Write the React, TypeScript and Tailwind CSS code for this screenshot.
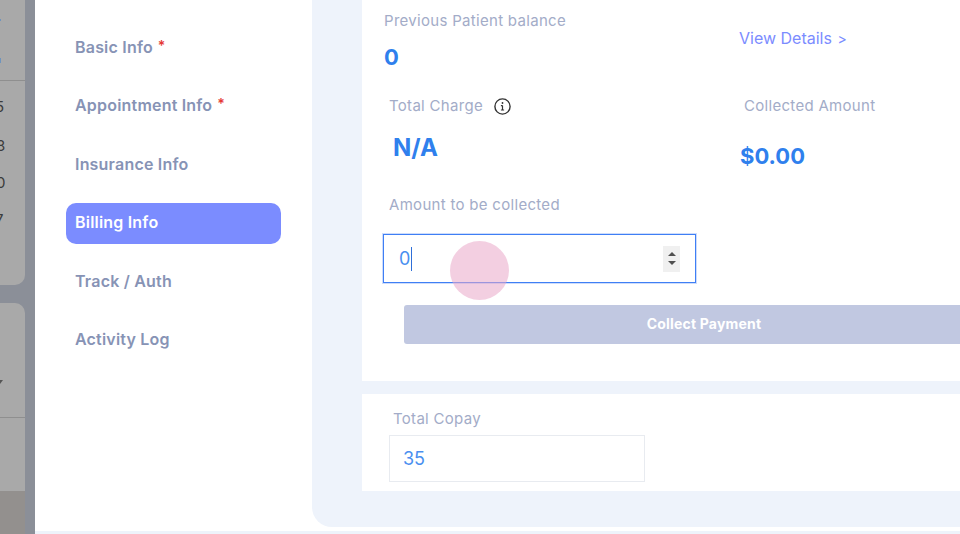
const navItems = [
  { label: "Basic Info", required: true },
  { label: "Appointment Info", required: true },
  { label: "Insurance Info" },
  { label: "Billing Info", active: true },
  { label: "Track / Auth" },
  { label: "Activity Log" },
];

const BackdropStrip = () => (
  <aside className="relative h-[534px] w-[35px] shrink-0 overflow-hidden bg-[#8b8f98] text-[15px] text-[#3c3c3c]">
    <div className="h-[285px] w-[25px] rounded-br-[10px] bg-[#a9a9a9]">
      <div className="h-[81px] border-b border-[#8f8f8f]" />
      <div className="flex w-[5px] flex-col overflow-hidden pt-[17px] leading-[18px]">
        <span className="-ml-[5px] mb-[21px]">5</span>
        <span className="-ml-[4px] mb-[19px]">8</span>
        <span className="-ml-[4px] mb-[19px]">0</span>
        <span className="-ml-[5px]">7</span>
      </div>
    </div>
    <div className="mt-[18px] h-[188px] w-[25px] rounded-tr-[10px] bg-[#a9a9a9]">
      <div className="h-[115px] border-b border-[#8f8f8f]" />
    </div>
    <div className="h-[43px] w-[25px] bg-[#93908e]" />
    {/* bits of the page behind the dialog, cut off by the window edge */}
    <span className="absolute left-0 top-[19px] h-[2px] w-px bg-[#6f94bd]" />
    <span className="absolute left-0 top-[58px] h-[5px] w-px bg-[#6f94bd]" />
    <span className="absolute -left-[3px] top-[380px] h-0 w-0 border-x-[3px] border-t-[4px] border-x-transparent border-t-[#555]" />
  </aside>
);

const Sidebar = () => (
  <nav className="flex h-[531px] w-[277px] shrink-0 flex-col bg-white pl-[31px] pr-[31px] pt-[28px]">
    {navItems.map((item) => (
      <div
        key={item.label}
        className={`mb-[17.4px] flex h-[41px] items-center rounded-[10px] pb-[3px] pl-[9px] text-[16px] font-semibold tracking-[0.2px] ${
          item.active ? "bg-[#7b8cff] text-white" : "text-[#8793b5]"
        }`}
      >
        {item.label}
        {item.required && <span className="-mt-[3px] ml-[5px] text-[14px] text-[#e53935]">*</span>}
      </div>
    ))}
  </nav>
);

const Label = ({ children }: { children: React.ReactNode }) => (
  <div className="text-[15px] leading-[20px] tracking-[0.3px] text-[#a3acc8]">{children}</div>
);

const Billing = () => (
  <main className="min-w-0 flex-1 bg-white">
    <div className="flex h-[527px] flex-col rounded-bl-[20px] bg-[#eef3fb] pb-[36px] pl-[50px]">
      <section className="h-[381px] bg-white pl-[22px]">
        <div className="flex pt-[11px]">
          <div className="w-[355px]">
            <Label>Previous Patient balance</Label>
            <div className="mt-[11px] text-[22px] font-bold leading-[30px] text-[#2f80ed]">0</div>
          </div>
          <a className="mt-[17px] text-[16px] leading-[20px] text-[#7b8cff]">
            View Details <span className="ml-[1px] text-[14px]">&gt;</span>
          </a>
        </div>
        <div className="mt-[24px] flex pl-[5px]">
          <div className="w-[355px]">
            <div className="flex items-center gap-[11px]">
              <Label>Total Charge</Label>
              <svg width="17" height="17" viewBox="0 0 17 17" fill="none" stroke="#333" strokeWidth="1.4">
                <circle cx="8.5" cy="8.5" r="7.6" />
                <path d="M8.5 7.6v4.4M6.9 12h3.2M6.9 7.6h1.6" strokeWidth="1.2" />
                <circle cx="8.5" cy="5" r="0.9" fill="#333" stroke="none" />
              </svg>
            </div>
            <div className="mt-[17px] pl-[4px] text-[24px] font-bold leading-[30px] text-[#2f80ed]">N/A</div>
          </div>
          <div>
            <Label>Collected Amount</Label>
            <div className="-ml-[4px] mt-[25px] text-[22px] font-bold leading-[30px] text-[#2f80ed]">$0.00</div>
          </div>
        </div>
        <div className="mt-[24px] pl-[5px]">
          <Label>Amount to be collected</Label>
        </div>
        <div className="mt-[19px] flex h-[49px] w-[313px] -translate-x-px items-center justify-between border border-[#3f7ff5] pl-[15px] pr-[15px] text-[18px] text-[#4a8ff0] shadow-[0_0_0_1px_#cddcfb]">
          <span className="flex items-center">
            0<span className="ml-[1px] h-[24px] w-px bg-[#2f6fd8]" />
          </span>
          <span className="flex h-[26px] w-[17px] flex-col items-center justify-center gap-[5px] bg-[#f0f0f0]">
            <span className="h-0 w-0 border-x-[4px] border-b-[4px] border-x-transparent border-b-[#505050]" />
            <span className="h-0 w-0 border-x-[4px] border-t-[4px] border-x-transparent border-t-[#505050]" />
          </span>
        </div>
        <button className="ml-[20px] mt-[22px] flex h-[39px] w-[600px] items-center justify-center rounded-[3px] bg-[#c1c8e1] pb-[2px] text-[14px] font-bold tracking-[0.2px] text-white">
          Collect Payment
        </button>
      </section>
      <section className="mt-[13px] h-[97px] bg-white pl-[27px]">
        <div className="pl-[4px] pt-[15px]">
          <Label>Total Copay</Label>
        </div>
        <div className="mt-[6px] flex h-[47px] w-[256px] items-center border border-[#e8ebf0] pl-[13px] text-[18px] text-[#4a8ff0]">
          35
        </div>
      </section>
    </div>
  </main>
);

export default function App() {
  return (
    <div className="relative h-[534px] w-[960px] overflow-hidden bg-[#eef3fb] font-['Inter','Liberation_Sans',sans-serif]">
      <div className="flex h-[531px] items-start bg-white">
        <BackdropStrip />
        <Sidebar />
        <Billing />
      </div>
      {/* click marker from the screen recording */}
      <div className="absolute left-[450px] top-[241px] h-[59px] w-[59px] rounded-full bg-[#e9a8c8]/55" />
    </div>
  );
}
